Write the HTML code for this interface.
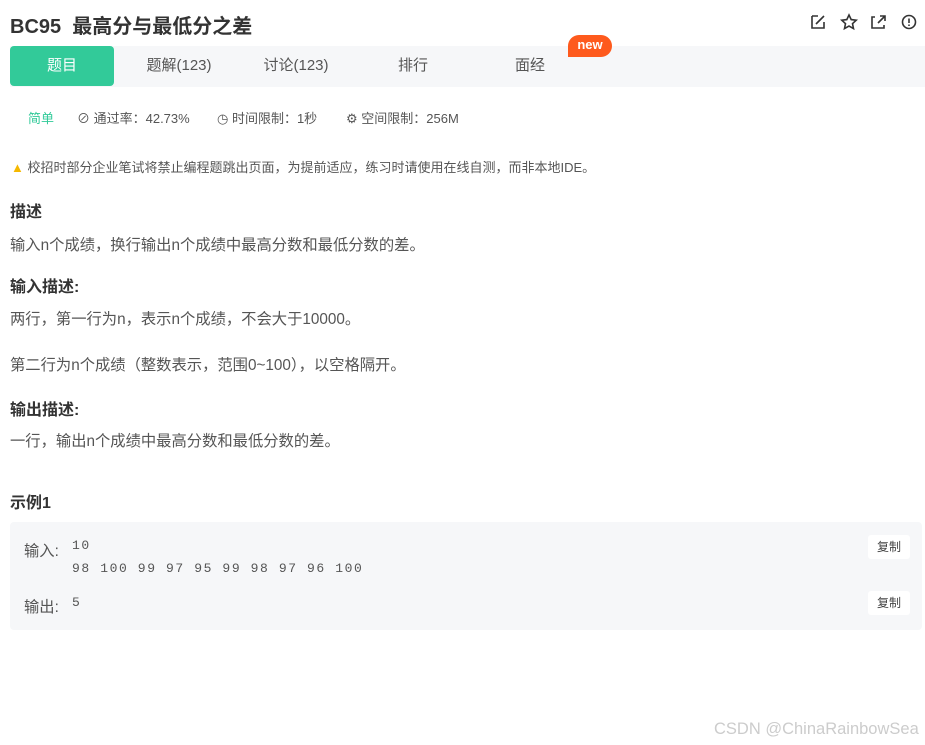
<!DOCTYPE html>
<html><head><meta charset="utf-8"><style>
*{margin:0;padding:0;box-sizing:border-box}
body{width:925px;height:745px;background:#fff;font-family:"Liberation Sans","Noto Sans CJK SC",sans-serif;color:#333;position:relative;overflow:hidden}
.a{position:absolute;white-space:nowrap}
h1{position:absolute;left:10px;top:10px;font-size:20px;font-weight:bold;color:#333}
.tabs{position:absolute;left:10px;top:46px;width:915px;height:41px;background:#f6f7f9}
.tab{position:absolute;top:0;height:40px;line-height:40px;font-size:15px;color:#555;text-align:center}
.sel{background:#32ca99;color:#fff;border-radius:4px;left:0;width:104px}
.new{position:absolute;left:568px;top:35px;width:44px;height:22px;background:#fe5a1d;color:#fff;border-radius:11px 11px 11px 0;font-size:13px;font-weight:bold;text-align:center;line-height:20px}
.meta{top:108px;font-size:13px;color:#555}
.t{font-size:15.3px;color:#555}
h3{position:absolute;left:10px;font-size:16px;font-weight:bold;color:#333}
.box{position:absolute;left:10px;top:522px;width:912px;height:108px;background:#f6f7f9;border-radius:4px}
.mono{font-family:"Liberation Mono",monospace;font-size:13px;color:#555;letter-spacing:1.6px}
.cp{position:absolute;right:12px;width:42px;height:24px;background:#fff;border-radius:3px;font-size:12px;color:#444;text-align:center;line-height:24px}
svg{position:absolute}
</style></head><body>
<h1>BC95&nbsp; 最高分与最低分之差</h1>
<svg style="left:810px;top:13px" width="110" height="18" fill="none" stroke="#333" stroke-width="1.6">
<path d="M2 3h6M2 3v12h12V9M6 11l8-8"/>
<path d="M39 2l2.2 4.6 5 .6-3.7 3.4 1 5-4.5-2.5-4.5 2.5 1-5-3.7-3.4 5-.6z"/>
<path d="M65 4h-3v11h12v-3M68 10l7-7M70 3h5v5"/>
<circle cx="99" cy="9" r="6.5"/><path d="M99 5.5v4.5M99 11.5v1.5"/>
</svg>
<div class="tabs">
<div class="tab sel">题目</div>
<div class="tab" style="left:124px;width:90px">题解(123)</div>
<div class="tab" style="left:241px;width:90px">讨论(123)</div>
<div class="tab" style="left:373px;width:60px">排行</div>
<div class="tab" style="left:490px;width:60px">面经</div>
</div>
<div class="new">new</div>
<div class="a meta" style="left:28px;color:#32ca99">简单</div>
<div class="a meta" style="left:77px">⊘ 通过率：42.73%</div>
<div class="a meta" style="left:217px">◷ 时间限制：1秒</div>
<div class="a meta" style="left:346px">⚙ 空间限制：256M</div>
<div class="a" style="left:11px;top:157px;font-size:13px;color:#555"><span style="color:#f5b800">▲</span> 校招时部分企业笔试将禁止编程题跳出页面，为提前适应，练习时请使用在线自测，而非本地IDE。</div>
<h3 style="top:198px">描述</h3>
<div class="a t" style="left:10px;top:233px">输入n个成绩，换行输出n个成绩中最高分数和最低分数的差。</div>
<h3 style="top:273px">输入描述:</h3>
<div class="a t" style="left:10px;top:307px">两行，第一行为n，表示n个成绩，不会大于10000。</div>
<div class="a t" style="left:10px;top:353px">第二行为n个成绩（整数表示，范围0~100），以空格隔开。</div>
<h3 style="top:396px">输出描述:</h3>
<div class="a t" style="left:10px;top:429px">一行，输出n个成绩中最高分数和最低分数的差。</div>
<h3 style="top:489px">示例1</h3>
<div class="box">
<div class="a t" style="left:14px;top:17px">输入:</div>
<div class="a mono" style="left:62px;top:16px">10</div>
<div class="a mono" style="left:62px;top:39px">98 100 99 97 95 99 98 97 96 100</div>
<div class="a t" style="left:14px;top:73px">输出:</div>
<div class="a mono" style="left:62px;top:73px">5</div>
<div class="cp" style="top:13px">复制</div>
<div class="cp" style="top:69px">复制</div>
</div>
<div class="a" style="left:714px;top:720px;font-size:16.5px;color:#ccc">CSDN @ChinaRainbowSea</div>
</body></html>
